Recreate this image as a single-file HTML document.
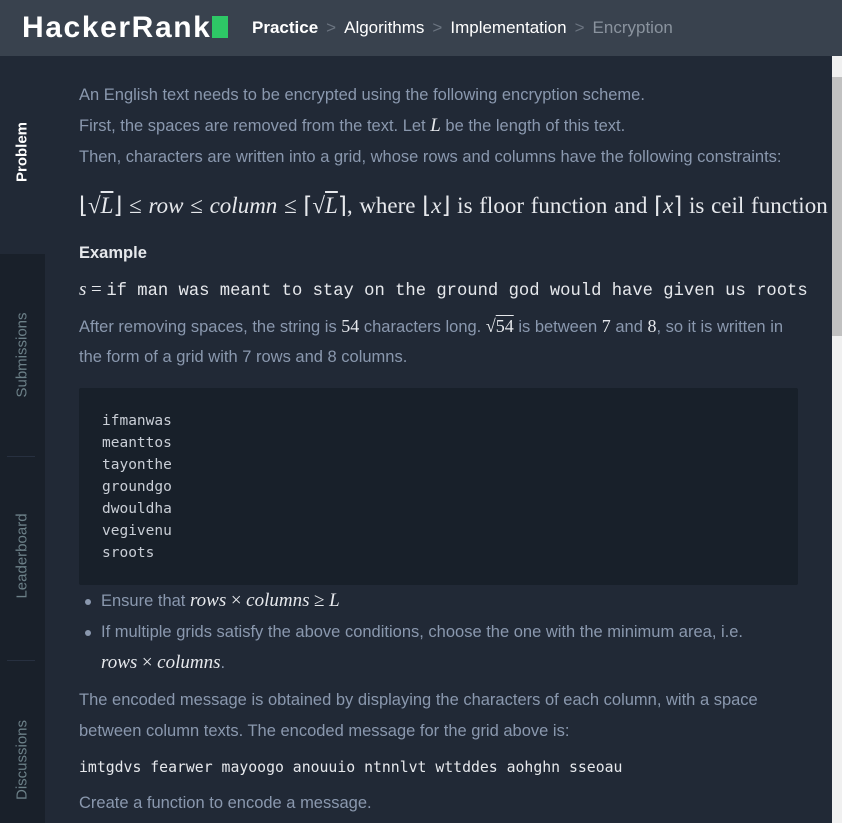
<!DOCTYPE html>
<html><head><style>
*{margin:0;padding:0;box-sizing:border-box}
body{width:842px;height:823px;overflow:hidden;background:#212936;font-family:"Liberation Sans",sans-serif;position:relative}
.hdr{position:absolute;left:0;top:0;width:842px;height:56px;background:#39424e}
.logo{position:absolute;left:22px;top:11px;font-size:30px;font-weight:bold;color:#fff;letter-spacing:1.6px}
.logo i{display:inline-block;width:16px;height:22px;background:#2ec866;vertical-align:-1px;margin-left:1px}
.bc{position:absolute;left:252px;top:18px;font-size:17px;color:#fff;white-space:nowrap}
.bc .s{color:#6b7480;margin:0 8px}
.side{position:absolute;left:0;top:56px;width:45px;height:767px}
.tab{position:absolute;left:0;width:45px;background:#19202a}
.lbl{position:absolute;left:22px;transform:translate(-50%,-50%) rotate(-90deg);white-space:nowrap;font-size:15px;color:#6c8088}
.div{position:absolute;left:7px;width:28px;height:1px;background:#273040}
.t{position:absolute;left:79px;white-space:nowrap;font-size:16.5px;line-height:20px;color:#8a98ae}
.m{font-family:"Liberation Serif",serif;color:#e6e8ec}
.mi{font-family:"Liberation Serif",serif;font-style:italic;color:#e6e8ec}
.mono{font-family:"Liberation Mono",monospace;color:#e6e8ec}
.code{position:absolute;left:79px;top:388px;width:719px;height:197px;background:#18202a;border-radius:2px}
.code pre{position:absolute;left:23px;top:22px;font-family:"DejaVu Sans Mono",monospace;font-size:14.5px;line-height:22px;color:#c9ced6}
.dot{display:inline-block;width:6px;height:6px;border-radius:3px;background:#8a98ae;position:absolute;left:-16px;top:8px}
.sb{position:absolute;left:832px;top:56px;width:10px;height:767px;background:#f0f0f0}
.th{position:absolute;left:832px;top:77px;width:10px;height:259px;background:#c1c1c1}
</style></head><body>
<div class="hdr">
<div class="logo">HackerRank<i></i></div>
<div class="bc"><b>Practice</b><span class="s">&gt;</span>Algorithms<span class="s">&gt;</span>Implementation<span class="s">&gt;</span><span style="color:#8a939e">Encryption</span></div>
</div>
<div class="side">
<div class="lbl" style="top:96px;color:#fff;font-weight:bold">Problem</div>
<div class="tab" style="top:198px;height:569px"></div>
<div class="div" style="top:400px"></div>
<div class="div" style="top:604px"></div>
<div class="lbl" style="top:299px">Submissions</div>
<div class="lbl" style="top:500px">Leaderboard</div>
<div class="lbl" style="top:704px">Discussions</div>
</div>

<div class="t" style="top:85px">An English text needs to be encrypted using the following encryption scheme.</div>
<div class="t" style="top:116px">First, the spaces are removed from the text. Let <span class="mi" style="font-size:19px">L</span> be the length of this text.</div>
<div class="t" style="top:147px">Then, characters are written into a grid, whose rows and columns have the following constraints:</div>
<div class="t m" style="top:194px;font-size:23px;line-height:24px;word-spacing:1px">⌊√<span style="text-decoration:overline" class="mi">L</span>⌋ ≤ <i>row</i> ≤ <i>column</i> ≤ ⌈√<span style="text-decoration:overline" class="mi">L</span>⌉, where ⌊<i>x</i>⌋ is floor function and ⌈<i>x</i>⌉ is ceil function</div>
<div class="t" style="top:243px;color:#e6e8ec;font-weight:bold">Example</div>
<div class="t" style="top:280px"><span class="mi" style="font-size:19px">s</span> <span class="m" style="font-size:19px">=</span> <span class="mono" style="font-size:17.2px">if man was meant to stay on the ground god would have given us roots</span></div>
<div class="t" style="top:316px">After removing spaces, the string is <span class="m" style="font-size:18px">54</span> characters long. <span class="m" style="font-size:18px">√<span style="text-decoration:overline">54</span></span> is between <span class="m" style="font-size:18px">7</span> and <span class="m" style="font-size:18px">8</span>, so it is written in</div>
<div class="t" style="top:347px">the form of a grid with 7 rows and 8 columns.</div>
<div class="code"><pre>ifmanwas
meanttos
tayonthe
groundgo
dwouldha
vegivenu
sroots</pre></div>
<div class="t" style="top:591px;left:101px"><span class="dot"></span>Ensure that <span class="mi" style="font-size:19px">rows</span> <span class="m" style="font-size:19px">×</span> <span class="mi" style="font-size:19px">columns</span> <span class="m" style="font-size:19px">≥</span> <span class="mi" style="font-size:19px">L</span></div>
<div class="t" style="top:622px;left:101px"><span class="dot"></span>If multiple grids satisfy the above conditions, choose the one with the minimum area, i.e.</div>
<div class="t" style="top:653px;left:101px"><span class="mi" style="font-size:19px">rows</span> <span class="m" style="font-size:19px">×</span> <span class="mi" style="font-size:19px">columns</span>.</div>
<div class="t" style="top:690px">The encoded message is obtained by displaying the characters of each column, with a space</div>
<div class="t" style="top:721px">between column texts. The encoded message for the grid above is:</div>
<div class="t" style="top:758px;font-family:'DejaVu Sans Mono',monospace;font-size:14.8px;color:#e6e8ec">imtgdvs fearwer mayoogo anouuio ntnnlvt wttddes aohghn sseoau</div>
<div class="t" style="top:793px">Create a function to encode a message.</div>
<div class="sb"></div><div class="th"></div>
</body></html>
